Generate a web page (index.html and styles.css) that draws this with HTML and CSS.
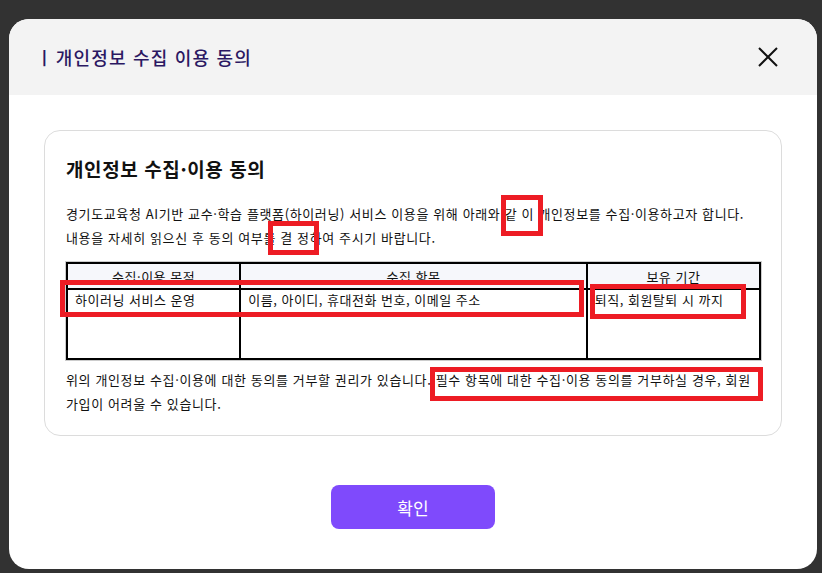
FILE: index.html
```html
<!DOCTYPE html>
<html lang="ko">
<head>
    <meta charset="UTF-8">
    <meta name="viewport" content="width=device-width, initial-scale=1.0">
    <title>개인정보 수집 이용 동의</title>
    <link rel="stylesheet" href="styles.css">
</head>
<body>
    <div class="modal">
        <div class="modal-header">
            <h2 class="modal-title"><span class="bar">ㅣ</span>개인정보 수집 이용 동의</h2>
            <button class="close-button" aria-label="닫기">
                <svg width="20" height="20" viewBox="0 0 20 20">
                    <path d="M1 1 L19 19 M19 1 L1 19" stroke="#111" stroke-width="2" fill="none"/>
                </svg>
            </button>
        </div>

        <div class="modal-body">
            <div class="terms-card">
                <h3 class="terms-title">개인정보 수집·이용 동의</h3>
                <p class="terms-text">
                    경기도교육청 AI기반 교수·학습 플랫폼(하이러닝) 서비스 이용을 위해 아래와 같 이 개인정보를 수집·이용하고자 합니다.<br>
                    내용을 자세히 읽으신 후 동의 여부를 결 정하여 주시기 바랍니다.
                </p>
                <table class="terms-table">
                    <thead>
                        <tr>
                            <th class="col-purpose">수집·이용 목적</th>
                            <th class="col-items">수집 항목</th>
                            <th class="col-period">보유 기간</th>
                        </tr>
                    </thead>
                    <tbody>
                        <tr>
                            <td>하이러닝 서비스 운영</td>
                            <td>이름, 아이디, 휴대전화 번호, 이메일 주소</td>
                            <td>퇴직, 회원탈퇴 시 까지</td>
                        </tr>
                    </tbody>
                </table>
                <p class="terms-text bottom">
                    위의 개인정보 수집·이용에 대한 동의를 거부할 권리가 있습니다. 필수 항목에 대한 수집·이용 동의를 거부하실 경우, 회원<br>
                    가입이 어려울 수 있습니다.
                </p>
            </div>
        </div>

        <div class="modal-footer">
            <button class="confirm-button">확인</button>
        </div>

        <!-- 검수 표시 -->
        <div class="mark mark-1"></div>
        <div class="mark mark-2"></div>
        <div class="mark mark-3"></div>
        <div class="mark mark-4"></div>
        <div class="mark mark-5"></div>
    </div>
</body>
</html>
```

FILE: styles.css
```css
body {
    font-family: "Noto Sans CJK KR", "Noto Sans", sans-serif;
    background: #323232;
    margin: 0;
    padding: 19px 5px 4px 9px;
    color: #111;
}
.modal {
    position: relative;
    width: 808px;
    height: 550px;
    background: #fff;
    border-radius: 20px;
    overflow: hidden;
    display: flex;
    flex-direction: column;
}
.modal-header {
    height: 76px;
    background: #f3f3f3;
    display: flex;
    align-items: center;
    justify-content: space-between;
    padding: 0 39px 0 27px;
}
.modal-title {
    margin: 0;
    font-size: 18px;
    font-weight: 500;
    color: #2b1862;
    letter-spacing: 1.2px;
}
.modal-title .bar {
    margin-right: 2px;
}
.close-button {
    background: none;
    border: none;
    padding: 0;
    width: 20px;
    height: 20px;
    cursor: pointer;
}
.modal-body {
    padding: 35px 35px 0;
}
.terms-card {
    height: 306px;
    box-sizing: border-box;
    border: 1px solid #dcdcdc;
    border-radius: 16px;
    padding: 26px 21px 0 21px;
}
.terms-title {
    margin: 0;
    font-size: 19px;
    line-height: 24px;
    font-weight: 700;
    letter-spacing: 0.6px;
}
.terms-text {
    margin: 21px 0 0;
    font-size: 13px;
    line-height: 24px;
    letter-spacing: 0.62px;
    white-space: nowrap;
}
.terms-text.bottom {
    margin-top: 8px;
}
.terms-table {
    width: 695px;
    margin-top: 12px;
    border-collapse: collapse;
    outline: 1px solid #ccc;
    font-size: 13px;
    letter-spacing: 0.5px;
}
.terms-table th,
.terms-table td {
    border: 2px solid #000;
    padding: 0 7px;
}
.terms-table th {
    height: 24px;
    background: #f6f7fb;
    font-weight: 400;
    text-align: center;
}
.terms-table td {
    height: 68px;
    vertical-align: top;
    line-height: 20px;
}
.col-purpose { width: 25%; }
.col-items { width: 50%; }
.col-period { width: 25%; }
.modal-footer {
    display: flex;
    justify-content: center;
    padding-top: 49px;
}
.confirm-button {
    width: 164px;
    height: 44px;
    background: #7f4afc;
    color: #fff;
    border: none;
    border-radius: 8px;
    font-family: inherit;
    font-size: 17px;
    cursor: pointer;
}
.mark {
    position: absolute;
    border: 5px solid #ed1c24;
    box-sizing: border-box;
}
.mark-1 { left: 492px; top: 176px; width: 42px; height: 41px; }
.mark-2 { left: 259px; top: 202px; width: 51px; height: 34px; }
.mark-3 { left: 51px; top: 261px; width: 524px; height: 37px; }
.mark-4 { left: 581px; top: 265px; width: 156px; height: 35px; }
.mark-5 { left: 421px; top: 348px; width: 333px; height: 34px; }
```
